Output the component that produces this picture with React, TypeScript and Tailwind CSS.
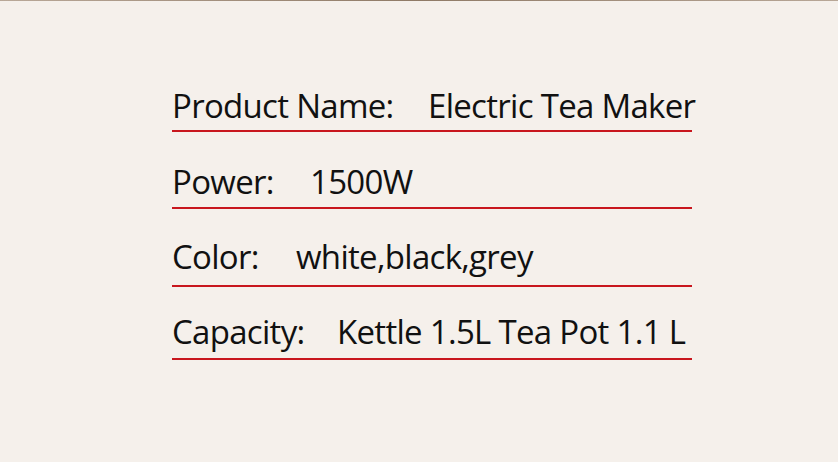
export default function App() {
  const rows = [
    { label: "Product Name:", value: "Electric Tea Maker", lw: "w-[256px]", mt: "mt-[85px]", lm: "mt-[4px]" },
    { label: "Power:", value: "1500W", lw: "w-[138px]", mt: "mt-[30px]", lm: "mt-[5px]" },
    { label: "Color:", value: "white,black,grey", lw: "w-[124px]", mt: "mt-[28px]", lm: "mt-[8px]" },
    { label: "Capacity:", value: "Kettle 1.5L Tea Pot 1.1 L", lw: "w-[165px]", mt: "mt-[25px]", lm: "mt-[6px]" },
  ];
  return (
    <div className="w-[838px] h-[462px] bg-[#f5f0eb] flex flex-col overflow-hidden">
      <div className="h-[1px] w-full bg-gradient-to-r from-[#b9a898] via-[#8f7a66] to-[#b8a797]" />
      <div className="pl-[172px] flex flex-col" style={{ fontFamily: '"Open Sans", sans-serif' }}>
        {rows.map((r) => (
          <div key={r.label} className={`w-[520px] flex flex-col ${r.mt}`}>
            <div className="flex text-[33px] leading-[40px] h-[40px] text-[#111] tracking-[-0.7px] whitespace-nowrap">
              <span className={`${r.lw} shrink-0`}>{r.label}</span>
              <span>{r.value}</span>
            </div>
            <div className={`h-[2px] bg-[#c8161d] ${r.lm}`} />
          </div>
        ))}
      </div>
    </div>
  );
}
